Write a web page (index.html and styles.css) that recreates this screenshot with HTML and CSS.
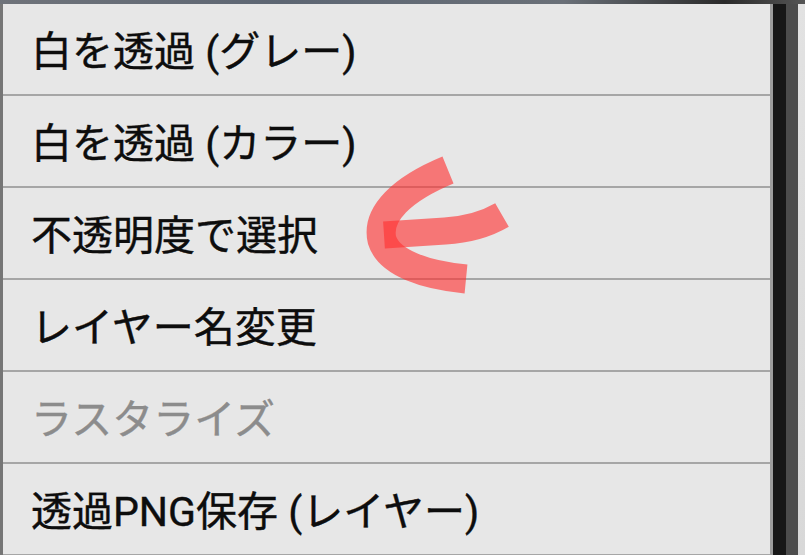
FILE: index.html
```html
<!DOCTYPE html>
<html lang="ja">
<head>
<meta charset="utf-8">
<title>Layer menu</title>
<link rel="stylesheet" href="styles.css">
</head>
<body>
<div class="screen">
  <div class="topstrip"></div>
  <div class="main">
    <div class="leftedge"></div>
    <ul class="menu">
      <li class="item">白を透過 (グレー)</li>
      <li class="item">白を透過 (カラー)</li>
      <li class="item">不透明度で選択</li>
      <li class="item">レイヤー名変更</li>
      <li class="item disabled">ラスタライズ</li>
      <li class="item">透過PNG保存 (レイヤー)</li>
    </ul>
    <div class="bar-black"></div>
    <div class="bar-grey"></div>
    <div class="bar-light"></div>
  </div>
  <svg class="arrow" width="805" height="555" viewBox="0 0 805 555">
    <path class="stroke" d="M448 170 C402 189 376 214 382 240 C389 263 425 275 466 279" stroke-width="29"/>
    <path class="stroke" d="M384 235 L445 231 Q478 229 502 215" stroke-width="27"/>
  </svg>
</div>
</body>
</html>
```
FILE: styles.css
```css
html, body {
  margin: 0;
  padding: 0;
  background: #1b1b1b;
  overflow: hidden;
}

.screen {
  position: relative;
  width: 805px;
  height: 555px;
  display: flex;
  flex-direction: column;
}

.topstrip {
  height: 4px;
  background: linear-gradient(to right, #6f737a 0%, #5d6673 35%, #6a7078 70%, #2a2a2a 90%, #555 100%);
  flex: none;
}

.main {
  flex: 1;
  display: flex;
  min-height: 0;
}

.leftedge {
  width: 3px;
  background: #767676;
  flex: none;
}

.menu {
  list-style: none;
  margin: 0;
  padding: 0;
  width: 767px;
  flex: none;
  background: #e7e7e7;
  border-right: 3px solid #9c9c9c;
  font-family: Roboto, "Noto Sans CJK JP", sans-serif;
  font-size: 41px;
  font-weight: 400;
  color: #0d0d0d;
  -webkit-text-stroke: 0.4px #0d0d0d;
}

.item {
  box-sizing: border-box;
  height: 92px;
  display: flex;
  align-items: center;
  padding-left: 28px;
  padding-bottom: 2px;
  border-bottom: 2px solid #a6a6a6;
  white-space: nowrap;
}

.item.disabled {
  color: #8c8c8c;
  -webkit-text-stroke: 0.4px #8c8c8c;
}

.bar-black {
  width: 13px;
  background: #171717;
  flex: none;
}

.bar-grey {
  width: 12px;
  background: #4c4c4c;
  flex: none;
}

.bar-light {
  flex: 1;
  background: linear-gradient(to bottom, #e2e2e2, #d8d8d8);
}

.arrow {
  position: absolute;
  left: 0;
  top: 0;
  pointer-events: none;
}

.stroke {
  fill: none;
  stroke: #ff3030;
  stroke-opacity: 0.62;
  stroke-linecap: butt;
  stroke-linejoin: round;
}
```
